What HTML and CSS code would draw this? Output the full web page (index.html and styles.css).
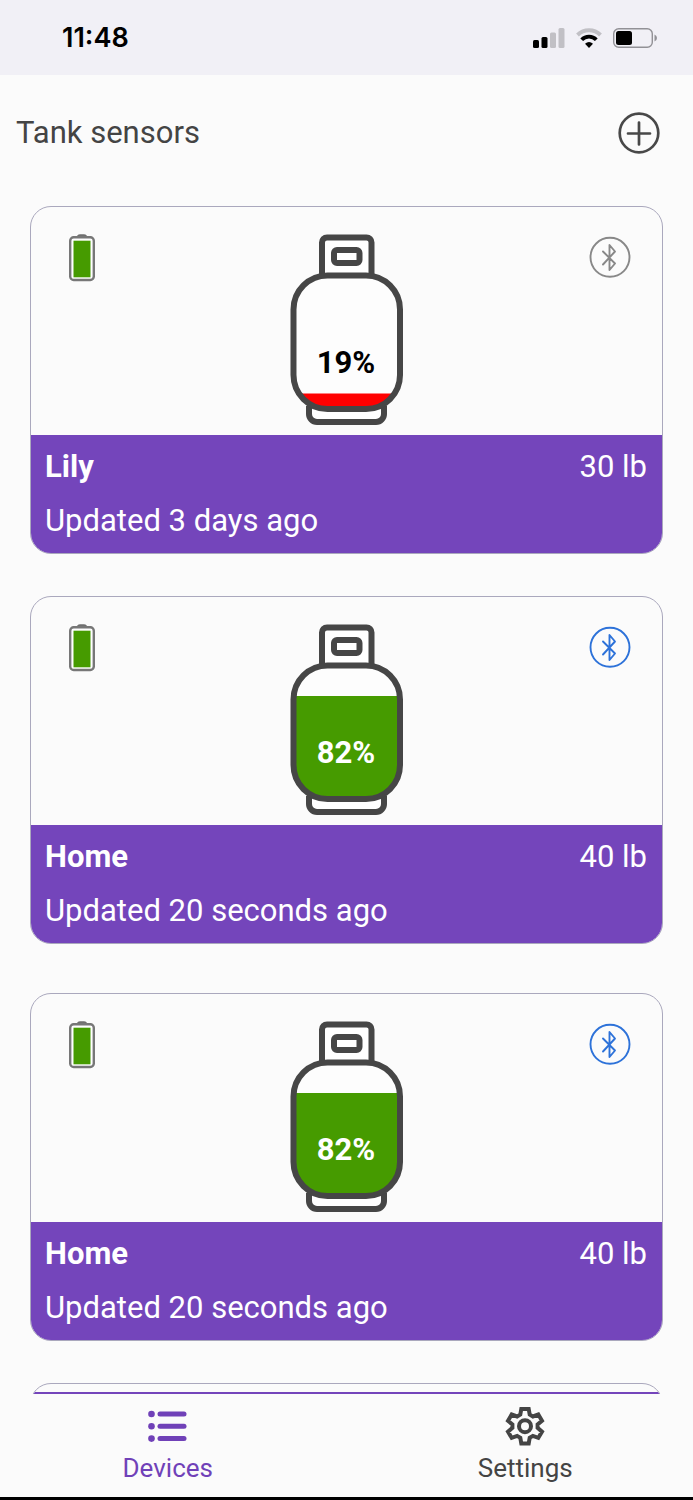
FILE: index.html
```
<!DOCTYPE html>
<html lang="en">

<head>
    <meta charset="UTF-8">
    <meta name="viewport" content="width=device-width, initial-scale=1.0">
    <title>Tank sensors</title>
    <link rel="stylesheet" href="styles.css">
</head>

<body>
    <!-- shared icons -->
    <svg class="sprite" aria-hidden="true">
        <symbol id="battery" viewBox="0 0 26 48">
            <path d="M8 3Q8 .3 11 .3h4Q18 .3 18 3z" fill="#6f6f6f" />
            <rect x="1.200" y="3.200" width="23.600" height="42.800" rx="3.500" fill="#fff" stroke="#777" stroke-width="2.400" />
            <rect x="4.500" y="6.700" width="17" height="36.600" fill="#469b00" />
        </symbol>
        <symbol id="bluetooth" viewBox="0 0 42 42">
            <circle cx="21" cy="21.300" r="19.500" fill="none" stroke="currentColor" stroke-width="1.900" />
            <path d="M14 15.500L26 27.500L20.500 34V9L26 15.500L14 28.500" fill="none" stroke="currentColor" stroke-width="1.900" stroke-linejoin="round" stroke-linecap="round" />
        </symbol>
        <symbol id="tank" viewBox="0 0 114 192">
            <path d="M19 172v8a8 8 0 0 0 8 8h59a8 8 0 0 0 8-8v-8" fill="#fff" stroke="#464646" stroke-width="6" />
            <path d="M32 42V8.500a5 5 0 0 1 5-5h39.500a5 5 0 0 1 5 5V42" fill="#fff" stroke="#464646" stroke-width="6" />
            <rect x="44" y="16" width="25.500" height="13" rx="3" fill="#fff" stroke="#464646" stroke-width="6" />
        </symbol>
        <clipPath id="body">
            <rect x="3.500" y="41.500" width="106.500" height="133.500" rx="34" />
        </clipPath>
    </svg>

    <div class="status">
        <span class="time">11:48</span>
        <div class="status-icons">
            <svg width="32" height="20" viewBox="0 0 32 20">
                <rect x="0" y="12" width="6" height="8" rx="1.500" />
                <rect x="8.500" y="9" width="6" height="11" rx="1.500" />
                <rect x="17" y="4.500" width="6" height="15.500" rx="1.500" fill="#c1c0c5" />
                <rect x="25.500" y="0" width="6" height="20" rx="1.500" fill="#c1c0c5" />
            </svg>
            <svg width="26" height="20" viewBox="0 0 26 20">
                <path d="M1.500 7A16.500 16.500 0 0 1 24.500 7" fill="none" stroke="#c1c0c5" stroke-width="4" />
                <path d="M5.700 11.800A10 10 0 0 1 20.300 11.800" fill="none" stroke="#000" stroke-width="3.800" />
                <path d="M9 15.800Q13 12.200 17 15.800L13 19.900z" />
            </svg>
            <svg width="44" height="20" viewBox="0 0 44 20">
                <rect x=".7" y=".7" width="38.600" height="18.600" rx="5" fill="none" stroke="#929196" stroke-width="1.400" />
                <rect x="3" y="3" width="16" height="14" rx="2.500" />
                <path d="M41.500 6.500q2.500 1 2.500 3.500t-2.500 3.500z" fill="#929196" />
            </svg>
        </div>
    </div>

    <header class="header">
        <h1>Tank sensors</h1>
        <button type="button" class="add" aria-label="Add sensor">
            <svg width="42" height="42" viewBox="0 0 42 42" fill="none" stroke="#484848" stroke-width="2.700" stroke-linecap="round">
                <circle cx="21" cy="21" r="19.300" />
                <path d="M21 10.500v22M10 21.500h22" />
            </svg>
        </button>
    </header>

    <main class="list">
        <div class="group">
            <article class="card">
                <div class="card-top">
                    <svg class="battery"><use href="#battery" /></svg>
                    <svg class="tank" viewBox="0 0 114 192">
                        <use href="#tank" />
                        <g clip-path="url(#body)">
                            <rect y="38" width="114" height="140" fill="#fdfdfd" />
                            <rect y="159.500" width="114" height="18" fill="#f00" />
                        </g>
                        <rect class="shell" x="3.500" y="41.500" width="106.500" height="133.500" rx="34" />
                        <text x="56" y="139">19%</text>
                    </svg>
                    <svg class="bluetooth"><use href="#bluetooth" /></svg>
                </div>
                <div class="card-info">
                    <div class="row">
                        <h2>Lily</h2>
                        <span>30 lb</span>
                    </div>
                    <p>Updated 3 days ago</p>
                </div>
            </article>
            <article class="card">
                <div class="card-top">
                    <svg class="battery"><use href="#battery" /></svg>
                    <svg class="tank full" viewBox="0 0 114 192">
                        <use href="#tank" />
                        <g clip-path="url(#body)">
                            <rect y="38" width="114" height="140" fill="#fdfdfd" />
                            <rect y="72" width="114" height="106" fill="#469b00" />
                        </g>
                        <rect class="shell" x="3.500" y="41.500" width="106.500" height="133.500" rx="34" />
                        <text x="56" y="139">82%</text>
                    </svg>
                    <svg class="bluetooth on"><use href="#bluetooth" /></svg>
                </div>
                <div class="card-info">
                    <div class="row">
                        <h2>Home</h2>
                        <span>40 lb</span>
                    </div>
                    <p>Updated 20 seconds ago</p>
                </div>
            </article>
        </div>
        <div class="group">
            <article class="card">
                <div class="card-top">
                    <svg class="battery"><use href="#battery" /></svg>
                    <svg class="tank full" viewBox="0 0 114 192">
                        <use href="#tank" />
                        <g clip-path="url(#body)">
                            <rect y="38" width="114" height="140" fill="#fdfdfd" />
                            <rect y="72" width="114" height="106" fill="#469b00" />
                        </g>
                        <rect class="shell" x="3.500" y="41.500" width="106.500" height="133.500" rx="34" />
                        <text x="56" y="139">82%</text>
                    </svg>
                    <svg class="bluetooth on"><use href="#bluetooth" /></svg>
                </div>
                <div class="card-info">
                    <div class="row">
                        <h2>Home</h2>
                        <span>40 lb</span>
                    </div>
                    <p>Updated 20 seconds ago</p>
                </div>
            </article>
            <article class="card collapsed">
                <div class="card-top"></div>
                <div class="card-info"></div>
            </article>
        </div>
    </main>

    <nav class="tabs">
        <a href="#devices" class="active">
            <svg width="40" height="40" viewBox="0 0 40 40" fill="currentColor">
                <circle cx="3.500" cy="8" r="3.300" />
                <circle cx="3.500" cy="20.300" r="3.300" />
                <circle cx="3.500" cy="32.600" r="3.300" />
                <rect x="9.500" y="5.500" width="29" height="5" rx="2.500" />
                <rect x="9.500" y="17.800" width="29" height="5" rx="2.500" />
                <rect x="9.500" y="30.100" width="29" height="5" rx="2.500" />
            </svg>
            Devices
        </a>
        <a href="#settings">
            <svg width="40" height="40" viewBox="0 0 40 40" fill="none" stroke="currentColor" stroke-width="4">
                <path d="M16.300 3h7.400l1 5.600 3.200 1.900 5.400-2 3.700 6.300-4.400 3.700v3.400l4.400 3.700-3.700 6.300-5.400-2-3.200 1.900-1 5.600h-7.400l-1-5.600-3.200-1.900-5.400 2L3 25.600l4.400-3.700v-3.400L3 14.800l3.700-6.300 5.400 2 3.200-1.900z" />
                <circle cx="20" cy="20.200" r="6" />
            </svg>
            Settings
        </a>
    </nav>
</body>

</html>
```
FILE: styles.css
```
* {
    box-sizing: border-box;
    margin: 0;
    padding: 0;
}

body {
    display: flex;
    flex-direction: column;
    height: 100vh;
    background: #fbfbfb;
    color: #444;
    font-family: Roboto, "Liberation Sans", sans-serif;
    font-size: 31px;
    line-height: 36px;
}

svg {
    display: block;
    flex: none;
}

.sprite {
    position: absolute;
    width: 0;
    height: 0;
}

.status {
    display: flex;
    align-items: center;
    justify-content: space-between;
    height: 75px;
    padding: 0 36px 0 62px;
    background: #f1f0f6;
    color: #000;
    flex: none;
}

.time {
    font-family: Inter, sans-serif;
    font-size: 27px;
    font-weight: 600;
}

.status-icons {
    display: flex;
    gap: 11px;
}

.header {
    display: flex;
    align-items: center;
    justify-content: space-between;
    height: 116px;
    padding: 0 33px 0 16px;
    flex: none;
}

.header h1 {
    font-size: 31px;
    font-weight: 400;
}

.add {
    border: none;
    background: none;
    cursor: pointer;
}

.list {
    flex: 1;
    min-height: 0;
    padding: 15px 30px 0;
    overflow: hidden;
}

.group {
    display: flex;
    flex-direction: column;
    gap: 42px;
    margin-bottom: 49px;
}

.card {
    border: 1px solid #aaa8bd;
    border-radius: 21px;
    overflow: hidden;
}

.card-top {
    display: flex;
    justify-content: space-between;
    height: 228px;
    padding: 27px 31px 0 38px;
}

.battery {
    width: 26px;
    height: 48px;
    margin-right: 9px;
}

.bluetooth {
    width: 42px;
    height: 42px;
    margin-top: 2px;
    color: #888;
}

.bluetooth.on {
    color: #2d72d9;
}

.tank {
    width: 114px;
    height: 192px;
}

.tank .shell {
    fill: none;
    stroke: #464646;
    stroke-width: 6px;
}

.tank text {
    fill: #000;
    font-weight: 700;
    text-anchor: middle;
}

.tank.full text {
    fill: #fff;
}

.card-info {
    display: flex;
    flex-direction: column;
    gap: 18px;
    height: 118px;
    padding: 14px 15px 14px 14px;
    background: #7445bb;
    color: #fff;
}

.row {
    display: flex;
    justify-content: space-between;
}

.row h2 {
    font-size: 31px;
    font-weight: 700;
}

.collapsed .card-top {
    height: 8px;
    padding: 0;
}

.tabs {
    display: grid;
    grid-template-columns: 1fr 1fr;
    column-gap: 22px;
    height: 106px;
    padding-top: 12px;
    border-bottom: 3px solid #000;
    background: #fbfbfb;
    flex: none;
}

.tabs a {
    display: flex;
    flex-direction: column;
    align-items: center;
    gap: 4px;
    color: #444;
    font-size: 26px;
    text-decoration: none;
}

.tabs a.active {
    color: #7041b8;
}
```
